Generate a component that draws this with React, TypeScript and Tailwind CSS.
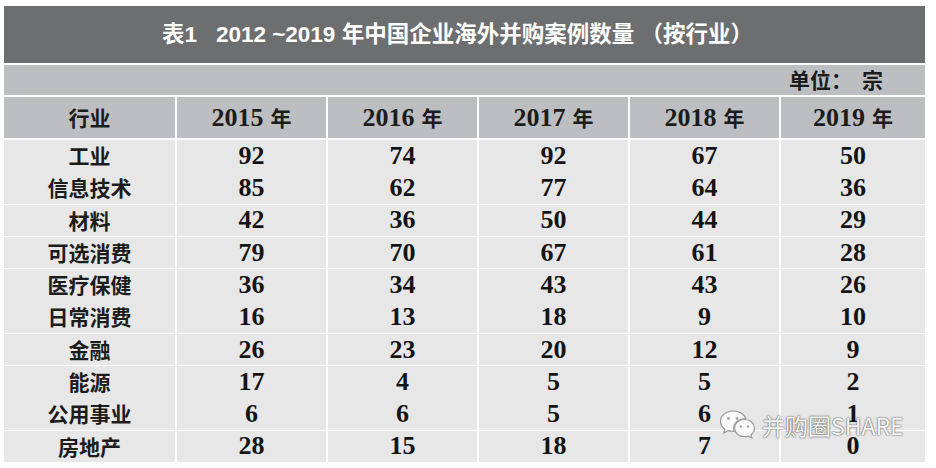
import React from "react";

const rows: [string, number[]][] = [
  ["工业", [92, 74, 92, 67, 50]],
  ["信息技术", [85, 62, 77, 64, 36]],
  ["材料", [42, 36, 50, 44, 29]],
  ["可选消费", [79, 70, 67, 61, 28]],
  ["医疗保健", [36, 34, 43, 43, 26]],
  ["日常消费", [16, 13, 18, 9, 10]],
  ["金融", [26, 23, 20, 12, 9]],
  ["能源", [17, 4, 5, 5, 2]],
  ["公用事业", [6, 6, 5, 6, 1]],
  ["房地产", [28, 15, 18, 7, 0]],
];

const years = ["2015", "2016", "2017", "2018", "2019"];

const cjk = "font-['Noto_Sans_CJK_SC',sans-serif]";
const num = "font-['Liberation_Serif','Noto_Sans_CJK_SC',serif]";

function WeChatIcon() {
  return (
    <svg width="38" height="32" viewBox="0 0 38 32">
      <path
        d="M15 2C8 2 2.5 6.6 2.5 12.3c0 3.2 1.7 6 4.4 7.9L5.8 24l4.3-2.3c1.5.4 3.1.7 4.9.7.4 0 .8 0 1.2-.1-.3-1-.5-2-.5-3 0-5.4 5-9.7 11.2-9.7h.9C26.6 5.1 21.3 2 15 2z"
        fill="#fafafa"
        stroke="#9a9a9a"
        strokeWidth="1.2"
      />
      <circle cx="10.5" cy="9.5" r="1.4" fill="#a0a0a0" />
      <circle cx="19" cy="9.5" r="1.4" fill="#a0a0a0" />
      <path
        d="M26.5 10.5c-5.6 0-10 3.8-10 8.6s4.4 8.6 10 8.6c1.3 0 2.6-.2 3.8-.6l3.6 2-1-3.3c2.3-1.6 3.6-4 3.6-6.7 0-4.8-4.4-8.6-10-8.6z"
        fill="#fafafa"
        stroke="#9a9a9a"
        strokeWidth="1.2"
      />
      <circle cx="22.8" cy="17.5" r="1.2" fill="#a0a0a0" />
      <circle cx="30" cy="17.5" r="1.2" fill="#a0a0a0" />
    </svg>
  );
}

export default function App() {
  const gridCols = "grid grid-cols-[171px_149px_149px_149px_149px_1fr] gap-[2px]";
  return (
    <div className="w-[936px] h-[468px] bg-white relative overflow-hidden">
      <div className="ml-[4px] pt-[6px] w-[921px] flex flex-col gap-[2px]">
        <div
          className={`h-[57px] bg-[#6d6e70] flex items-center justify-center pr-[14px] text-white text-[22.5px] font-bold font-['Liberation_Sans','Noto_Sans_CJK_SC',sans-serif]`}
        >
          <span>表1&nbsp;&nbsp;&nbsp;2012 ~2019 年中国企业海外并购案例数量&nbsp;（按行业）</span>
        </div>
        <div
          className={`h-[30px] bg-[#bdbec1] flex items-center justify-end pr-[42px] text-[21px] font-bold text-[#1c1c1c] ${cjk}`}
        >
          <span>单位：</span>
          <span className="ml-[10px]">宗</span>
        </div>
        <div className={`${gridCols} h-[41px]`}>
          <div className={`bg-[#bdbec1] flex items-center justify-center text-[21px] font-bold text-[#1c1c1c] ${cjk}`}>
            行业
          </div>
          {years.map((y) => (
            <div
              key={y}
              className="bg-[#bdbec1] flex items-center justify-center text-[#1c1c1c]"
            >
              <span className={`${num} text-[26px] font-bold`}>{y}</span>
              <span className={`${cjk} text-[21px] font-bold ml-[7px]`}>年</span>
            </div>
          ))}
        </div>
        {rows.map(([name, vals]) => (
          <div key={name} className={`${gridCols} h-[30.3px]`}>
            <div className={`bg-[#e7e7e7] flex items-center justify-center text-[21px] font-bold text-[#1c1c1c] ${cjk}`}>
              {name}
            </div>
            {vals.map((v, i) => (
              <div
                key={i}
                className={`bg-[#e7e7e7] flex items-center justify-center text-[26px] font-bold leading-none text-[#141414] ${num}`}
              >
                {v}
              </div>
            ))}
          </div>
        ))}
      </div>
      <div className="absolute left-[718px] top-[408px] flex items-center gap-[6px]">
        <WeChatIcon />
        <span
          className={`text-[23px] font-normal text-[#f6f6f6] ${cjk} [text-shadow:0_0_2px_#555,0_0_1px_#666]`}
        >
          并购圈SHARE
        </span>
      </div>
    </div>
  );
}
